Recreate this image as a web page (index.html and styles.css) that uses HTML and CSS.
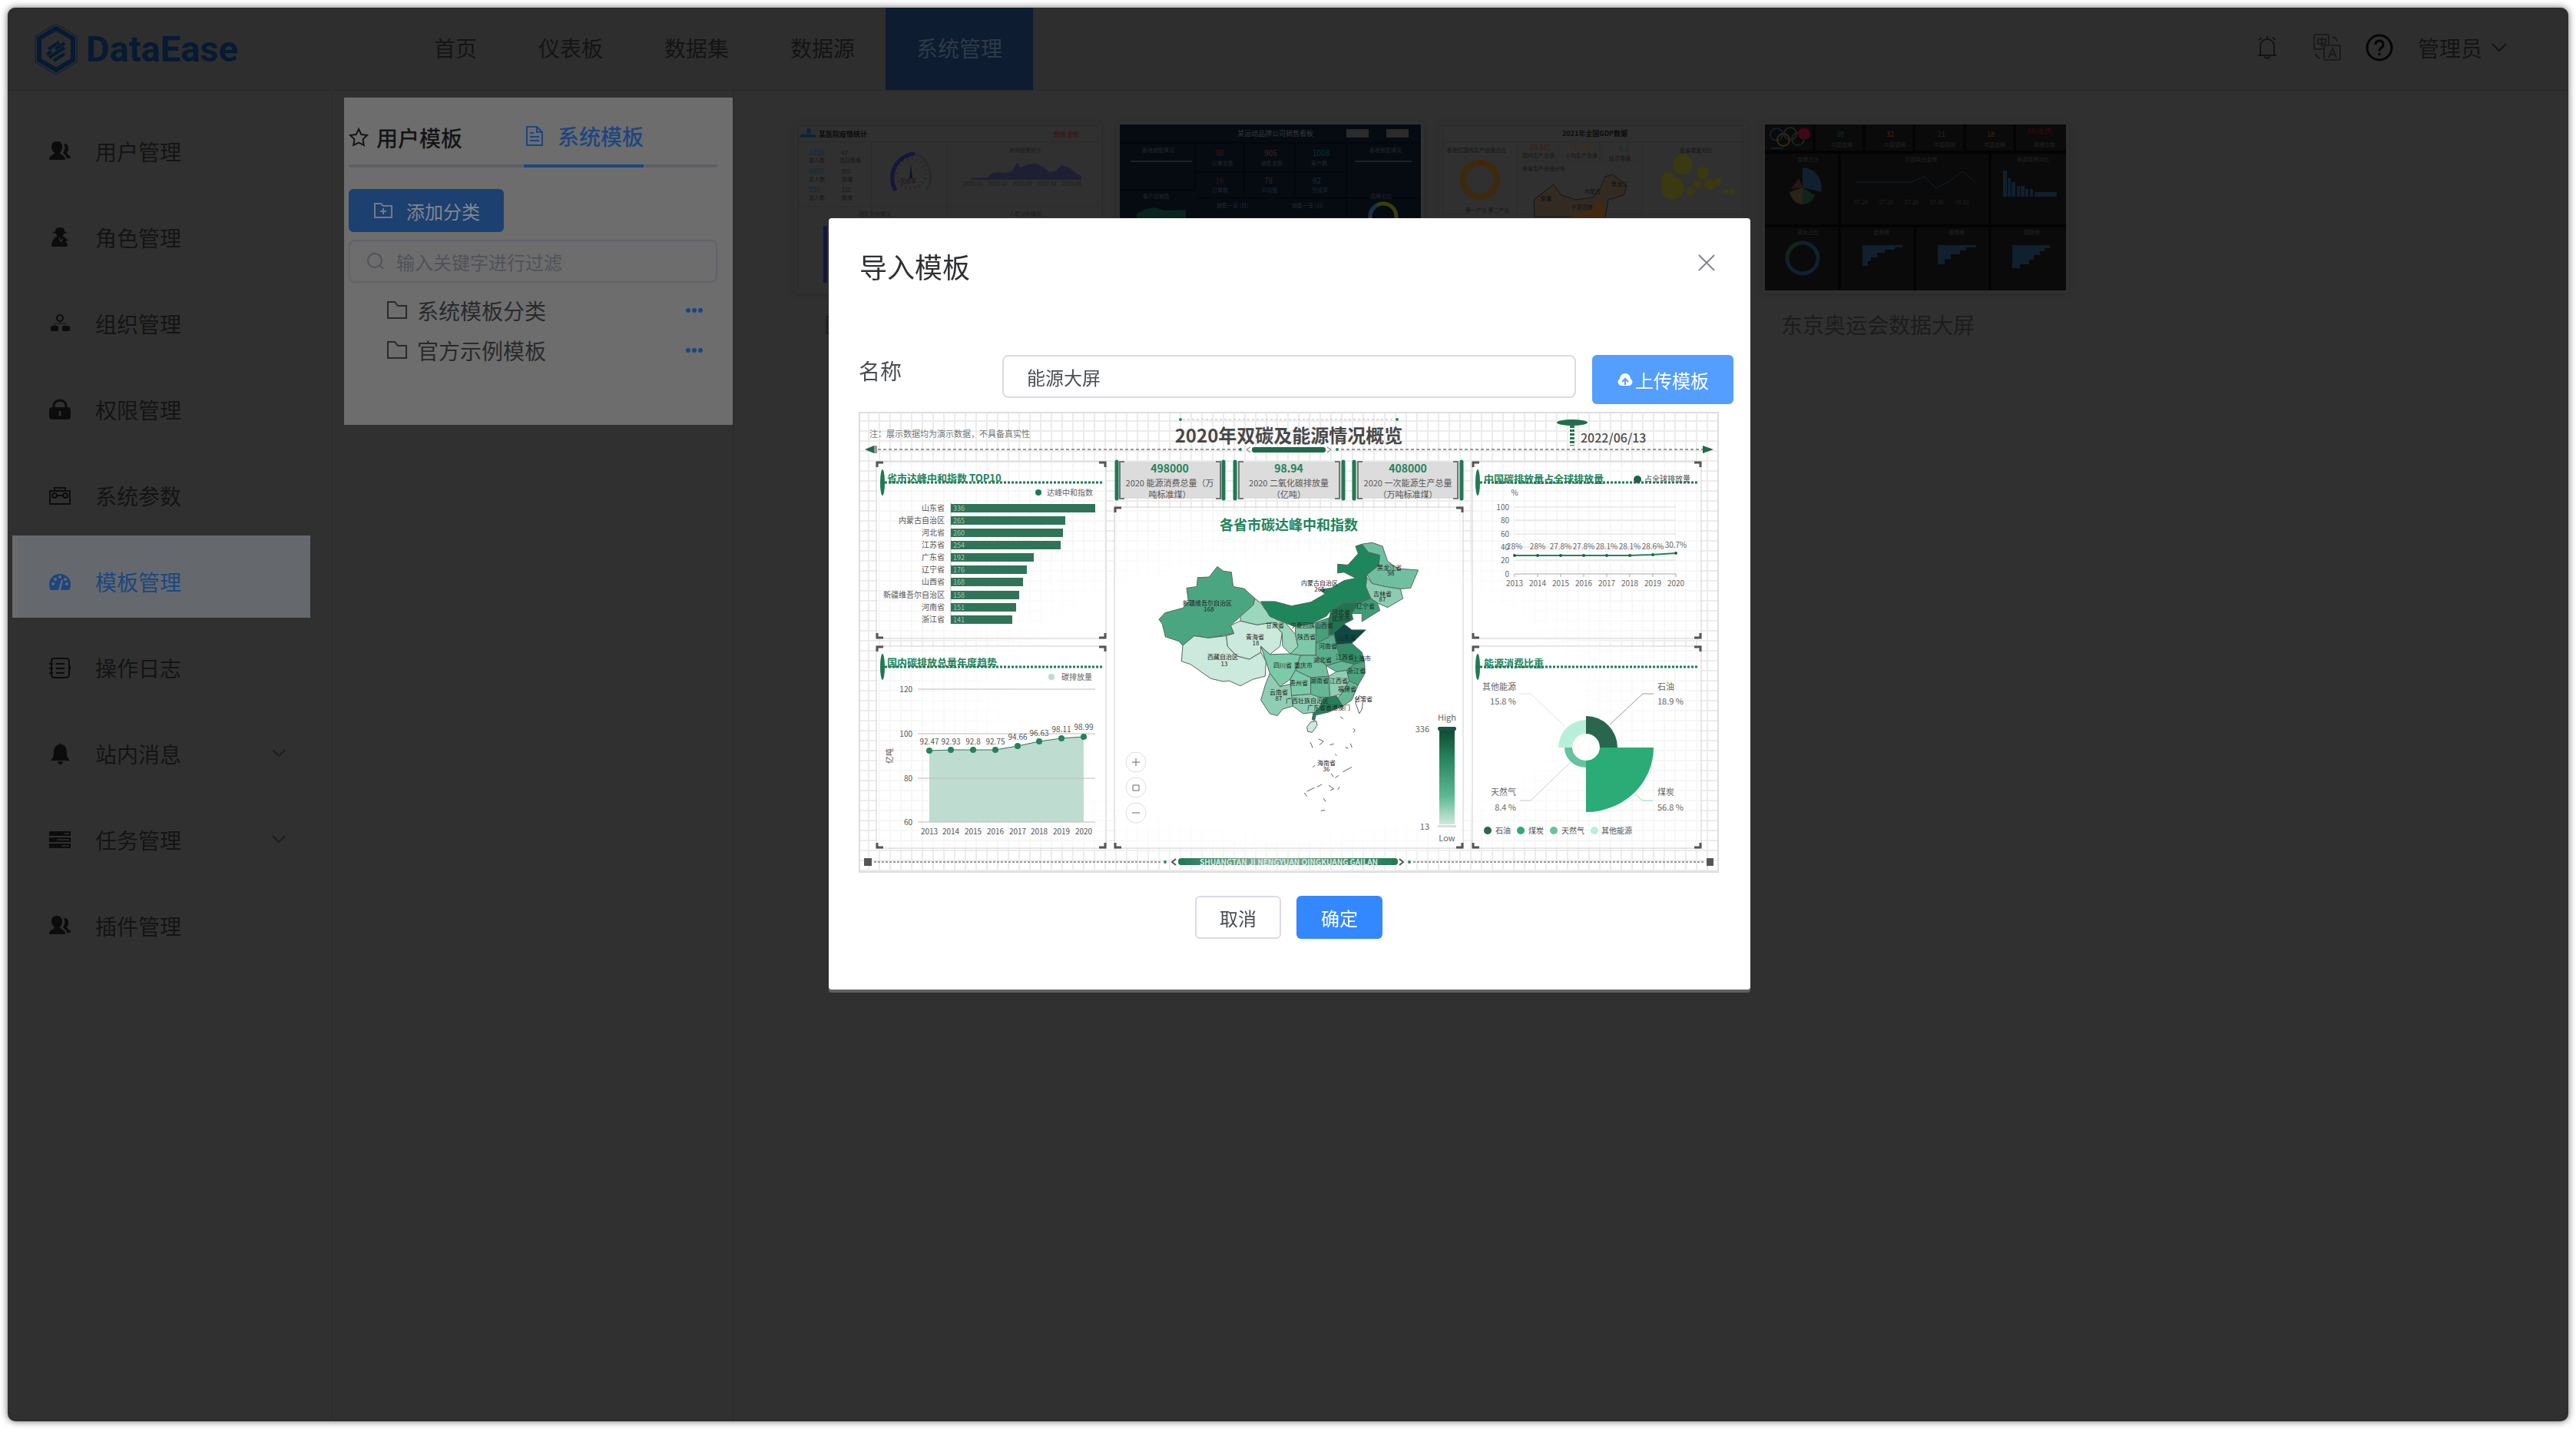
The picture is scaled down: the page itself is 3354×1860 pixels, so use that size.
FILE: index.html
```
<!DOCTYPE html>
<html lang="zh-CN">
<head>
    <meta charset="UTF-8">
    <meta name="viewport" content="width=device-width, initial-scale=1.0">
    <title>DataEase</title>
    <link rel="stylesheet" href="styles.css">
</head>
<body>
    <div class="window">
        <header class="topbar">
            <a class="logo" href="#">
                <svg width="60" height="70" viewBox="0 0 60 70" fill="none" stroke="#061a33">
                    <path d="M30 2 57 18V52L30 68 3 52V18Z" stroke-width="1"/>
                    <path d="M30 8 52 21V49L30 62 8 49V21Z" stroke-width="6"/>
                    <path d="M20 35 34 26M18 42 24 38M29 35 41 27M21 46 41 33M27 50 41 41" stroke-width="4"/>
                </svg>
                <span>DataEase</span>
            </a>
            <nav class="nav">
                <a href="#">首页</a>
                <a href="#">仪表板</a>
                <a href="#">数据集</a>
                <a href="#">数据源</a>
                <a href="#" class="active">系统管理</a>
            </nav>
            <div class="tools">
                <button type="button" class="tool-bell" aria-label="消息">
                    <svg width="26" height="32" viewBox="0 0 26 32" fill="none" stroke="#141414" stroke-width="2">
                        <path d="M13 1v3M4 26V14a9 9 0 0 1 18 0v12ZM1 26h24M9 28l4 2 4-2M2 6l4-3M24 6l-4-3"/>
                    </svg>
                </button>
                <button type="button" class="tool-lang" aria-label="语言">
                    <svg width="36" height="36" viewBox="0 0 36 36" fill="none" stroke="#1a1b1d" stroke-width="2">
                        <path d="M14 20H3a2 2 0 0 1-2-2V3a2 2 0 0 1 2-2h15a2 2 0 0 1 2 2v11M6 7h10v6H6ZM11 4v13M16 15h17a2 2 0 0 1 2 2v15a2 2 0 0 1-2 2H16a2 2 0 0 1-2-2V17a2 2 0 0 1 2-2ZM20 31l5-12 5 12M22 27h6M25 4q5 1 6 6M3 26q1 5 6 6"/>
                    </svg>
                </button>
                <button type="button" class="tool-help" aria-label="帮助">
                    <svg width="36" height="36" viewBox="0 0 36 36" fill="none" stroke="#060606" stroke-width="3">
                        <circle cx="18" cy="18" r="16"/>
                        <path d="M13 14q0-5 5-5t5 5q0 3-3 4.500-2 1-2 4M18 25v3"/>
                    </svg>
                </button>
                <button type="button" class="tool-user">管理员
                    <svg width="20" height="12" viewBox="0 0 20 12" fill="none" stroke="#141414" stroke-width="2"><path d="M1 1l9 9 9-9"/></svg>
                </button>
            </div>
        </header>

        <div class="body">
            <aside class="sidebar">
                <a href="#">
                    <svg viewBox="0 0 28 28"><path d="M10 1c5 0 7 3 7 7s-1 6-3 8c1 3 7 3 7 9H0c0-6 6-6 7-9-2-2-4-4-4-8s2-7 7-7ZM19 4c5 0 6 3 6 6s-1 5-2 6c1 3 5 3 5 7h-5c-1-4-3-5-5-7 3-4 3-8 1-12Z"/></svg>
                    <span>用户管理</span>
                </a>
                <a href="#">
                    <svg viewBox="0 0 28 28"><path d="M9 2l5-1 5 1 1 4 4 2-5 1q-1 5-5 5t-5-5L4 8l4-2ZM9 13h10l6 5-4 1 3 4-1 3H3q0-9 6-13Z"/><path d="M13 15l2 4 3-3" stroke="#303030" fill="none" stroke-width="1.500"/></svg>
                    <span>角色管理</span>
                </a>
                <a href="#">
                    <svg viewBox="0 0 28 28"><circle cx="14" cy="7" r="4" fill="none" stroke="#0c0c0c" stroke-width="2"/><path d="M14 11v3M7 18v-4h14v4" fill="none" stroke="#151515"/><rect x="2" y="17" width="10" height="7" rx="2"/><rect x="17" y="17" width="10" height="7" rx="2"/></svg>
                    <span>组织管理</span>
                </a>
                <a href="#">
                    <svg viewBox="0 0 28 28"><path d="M6 11V9a8 7 0 0 1 16 0v2" fill="none" stroke="#0c0c0c" stroke-width="3"/><rect y="11" width="28" height="16" rx="4"/><path d="M14 16v6" stroke="#303030" stroke-width="3"/></svg>
                    <span>权限管理</span>
                </a>
                <a href="#">
                    <svg viewBox="0 0 28 28" fill="none"><path d="M1 8h26v17H1ZM7 8V4h14v4M9 14h10" fill="none" stroke="#0c0c0c" stroke-width="2"/><circle cx="7" cy="14" r="3" fill="none" stroke="#0c0c0c" stroke-width="2"/><circle cx="21" cy="14" r="3" fill="none" stroke="#0c0c0c" stroke-width="2"/></svg>
                    <span>系统参数</span>
                </a>
                <a href="#" class="active">
                    <svg viewBox="0 0 28 28"><path d="M2 25q-2-2-2-8a14 13 0 0 1 28 0q0 6-2 8Z"/><g fill="#65696e"><circle cx="5" cy="17" r="2"/><circle cx="8" cy="11" r="2"/><circle cx="14" cy="8" r="2"/><circle cx="23" cy="17" r="2"/><circle cx="21" cy="11" r="2"/><path d="M16 11l2 1-3 13h-3Z"/></g></svg>
                    <span>模板管理</span>
                </a>
                <a href="#">
                    <svg viewBox="0 0 28 28"><path d="M6 2h16q4 0 4 4v17q0 4-4 4H6q-3 0-3-4V6q0-4 3-4ZM0 9h5M0 15h5M0 21h5M9 9h11M9 15h11M9 21h11M27 12v5" fill="none" stroke="#0c0c0c" stroke-width="2"/></svg>
                    <span>操作日志</span>
                </a>
                <a href="#">
                    <svg viewBox="0 0 28 28"><path d="M14 0l2 2c5 1 7 5 7 10 0 6 1 8 4 11H2c3-3 4-5 4-11 0-5 2-9 7-10ZM11 24h7q-1 4-3.500 4T11 24Z"/></svg>
                    <span>站内消息</span>
                    <svg class="arrow" viewBox="0 0 18 12"><path d="M1 1l8 8 8-8"/></svg>
                </a>
                <a href="#">
                    <svg viewBox="0 0 28 28"><path d="M0 3h28v6H0ZM0 11h28v6H0ZM0 19h28v6H0Z"/><path d="M20 6h6M10 14h16M16 22h10" stroke="#303030" stroke-width="1.500"/></svg>
                    <span>任务管理</span>
                    <svg class="arrow" viewBox="0 0 18 12"><path d="M1 1l8 8 8-8"/></svg>
                </a>
                <a href="#">
                    <svg viewBox="0 0 28 28"><path d="M10 1c5 0 7 3 7 7s-1 6-3 8c1 3 7 3 7 9H0c0-6 6-6 7-9-2-2-4-4-4-8s2-7 7-7ZM19 4c5 0 6 3 6 6s-1 5-2 6c1 3 5 3 5 7h-5c-1-4-3-5-5-7 3-4 3-8 1-12Z"/></svg>
                    <span>插件管理</span>
                </a>
            </aside>

            <section class="category">
                <div class="panel">
                    <div class="tabs">
                        <a href="#" class="tab">
                            <svg width="26" height="26" viewBox="0 0 26 26" fill="none" stroke="#161616" stroke-width="2"><path d="M13 2l3.300 7 7.700 1-5.500 5.300 1.300 7.700L13 19.500 6.200 23l1.300-7.700L2 10l7.700-1Z"/></svg>
                            用户模板
                        </a>
                        <a href="#" class="tab tab-active">
                            <svg width="24" height="26" viewBox="0 0 24 26" fill="none" stroke="#1c4680" stroke-width="2"><path d="M2 1h13l7 7v17H2ZM15 1v7h7M6 9h5M6 14h12M6 19h12"/></svg>
                            系统模板
                        </a>
                    </div>
                    <button type="button" class="add">
                        <svg width="24" height="20" viewBox="0 0 24 20" fill="none" stroke="#76797e" stroke-width="2"><path d="M1 1h8l3 3h11v15H1ZM8 11h8M12 7v8"/></svg>
                        添加分类
                    </button>
                    <div class="search">
                        <svg width="22" height="22" viewBox="0 0 22 22" fill="none" stroke="#505259" stroke-width="2"><circle cx="10" cy="10" r="9"/><path d="M17 17l4 4"/></svg>
                        <input type="text" aria-label="输入关键字进行过滤" placeholder="输入关键字进行过滤">
                    </div>
                    <ul class="tree">
                        <li>
                            <svg width="26" height="24" viewBox="0 0 26 24" fill="none" stroke="#292a2c" stroke-width="2"><path d="M1 1h9l4 5h11v16H1Z"/></svg>
                            <span>系统模板分类</span>
                            <button type="button" aria-label="更多"><svg width="24" height="8" viewBox="0 0 24 8" fill="#1c4680"><circle cx="4" cy="4" r="3"/><circle cx="12" cy="4" r="3"/><circle cx="20" cy="4" r="3"/></svg></button>
                        </li>
                        <li>
                            <svg width="26" height="24" viewBox="0 0 26 24" fill="none" stroke="#292a2c" stroke-width="2"><path d="M1 1h9l4 5h11v16H1Z"/></svg>
                            <span>官方示例模板</span>
                            <button type="button" aria-label="更多"><svg width="24" height="8" viewBox="0 0 24 8" fill="#1c4680"><circle cx="4" cy="4" r="3"/><circle cx="12" cy="4" r="3"/><circle cx="20" cy="4" r="3"/></svg></button>
                        </li>
                    </ul>
                </div>
            </section>

            <main class="cards">
                <article class="card">
                    <div class="thumb">
                        <svg viewBox="0 0 392 216">
                            <rect width="392" height="216" fill="#303030"/>
                            <path d="M0 23H392M0 107H392M97 23V216M195 23V216M.5 0V216M391.500 0V216M0 .5H392" stroke="#2a2a2a" fill="none"/>
                            <path d="M13 5l4 0 1 7-6 0ZM4 13h20v4H4Z" fill="#0b2638"/>
                            <text x="28" y="16" font-size="9" font-weight="700" fill="#0c0c0c">某医院疫情统计</text>
                            <text x="334" y="16" font-size="8" fill="#3f0f12">数据 更新</text>
                            <g font-size="9" fill="#0c2a3a"><text x="15" y="40">1700</text><text x="15" y="64">6800</text><text x="15" y="88">810</text></g>
                            <g font-size="7" fill="#161616"><text x="15" y="49">总人数</text><text x="15" y="74">总人数</text><text x="15" y="98">总人数</text><text x="58" y="40">67</text><text x="55" y="49">当日新增</text><text x="58" y="64">807</text><text x="58" y="74">新增</text><text x="58" y="88">221</text><text x="58" y="98">新增</text></g>
                            <path d="M128 86A32 32 0 0 1 153 38" fill="none" stroke="#15163b" stroke-width="5"/>
                            <path d="M153 38A32 32 0 0 1 168 86" fill="none" stroke="#2a2a2a" stroke-width="3"/>
                            <circle cx="148" cy="64" r="19" fill="none" stroke="#202020" stroke-width="4" stroke-dasharray="1 5"/>
                            <path d="M146 70l2-18 2 18Z" fill="#10112a"/>
                            <text x="134" y="76" font-size="7" fill="#241010">完成率</text>
                            <path d="M226 72V70L248 69 254 63 262 62 270 63 280 61 286 50 291 56 300 52 312 51 322 57 328 62 336 61 344 53 356 57 362 63 370 67V72Z" fill="#1e1f33"/>
                            <g font-size="7" fill="#1b1b1b"><text x="276" y="36">病例趋势统计</text><text x="216" y="80">2020-01</text><text x="248" y="80">2020-02</text><text x="280" y="80">2020-03</text><text x="312" y="80">2020-04</text><text x="344" y="80">2020-05</text><text x="80" y="119">地区分布情况</text><text x="276" y="119">人群分布情况</text></g>
                            <path d="M34 132h5v74h-5Z" fill="#15163b"/>
                        </svg>
                    </div>
                    <p>&ensp;医院疫情数据</p>
                </article>
                <article class="card">
                    <div class="thumb">
                        <svg viewBox="0 0 392 216">
                            <rect width="392" height="216" fill="#060b12"/>
                            <path d="M0 24H392M98 24V86M162 24V96M228 24V96M295 24V150M98 62H295M0 85H98M98 96H392" stroke="#03070c" stroke-width="2"/>
                            <rect x="295" y="6" width="29" height="11" fill="#2b2b2b"/><rect x="347" y="6" width="29" height="11" fill="#2b2b2b"/>
                            <text x="153" y="15" font-size="9" fill="#34373a">某运动品牌公司销售看板</text>
                            <g font-size="7" fill="#202831"><text x="29" y="36">各地销售情况</text><text x="325" y="36">各地销售情况</text><text x="120" y="53">订单总数</text><text x="184" y="53">销售总数</text><text x="249" y="53">客户数</text><text x="30" y="96">各产品销售</text><text x="326" y="96">品牌占比</text><text x="126" y="108">销售一览 (月)</text><text x="224" y="108">销售一览 (日)</text><text x="120" y="88">订单数</text><text x="184" y="88">平均值</text><text x="250" y="88">完成率</text></g>
                            <g font-size="10"><text x="124" y="41" fill="#401015">98</text><text x="188" y="41" fill="#402610">906</text><text x="251" y="41" fill="#08303e">1008</text><text x="124" y="77" fill="#30120e">16</text><text x="188" y="77" fill="#332611">78</text><text x="251" y="77" fill="#08303e">82</text></g>
                            <path d="M14 48H94M306 48H380" stroke="#1c2228" stroke-width="2"/>
                            <path d="M22 216V116L34 110 46 108 58 112 86 111V216Z" fill="#09241f"/>
                            <circle cx="343" cy="120" r="17" fill="none" stroke="#3c3d0b" stroke-width="5"/><path d="M326 120a17 17 0 0 1 9-15" fill="none" stroke="#14304d" stroke-width="5"/>
                        </svg>
                    </div>
                    <p></p>
                </article>
                <article class="card">
                    <div class="thumb">
                        <svg viewBox="0 0 392 216">
                            <rect width="392" height="216" fill="#303030"/>
                            <path d="M0 23H392M97 23V116M260 23V116M97 48H260M151 23V48M205 23V48M0 117H392M.5 0V216M391.500 0V216M0 .5H392" stroke="#2a2a2a" fill="none"/>
                            <text x="156" y="15" font-size="9" font-weight="700" fill="#0c0c0c">2021年全国GDP数据</text>
                            <g font-size="7" fill="#161616"><text x="6" y="36">各地区国内生产总值占比</text><text x="104" y="43">国内生产总值</text><text x="160" y="43">人均生产总值</text><text x="217" y="46">经济增速</text><text x="309" y="36">各省增速对比</text><text x="104" y="60">各省生产总值分布</text><text x="30" y="114">第一产业 第二产业</text></g>
                            <g font-size="9"><text x="114" y="33" fill="#401515">28.5亿</text><text x="166" y="33" fill="#40290f">4123亿</text><text x="230" y="35" fill="#0e3218">8.1</text></g>
                            <circle cx="49" cy="72" r="22" fill="none" stroke="#3d290c" stroke-width="8"/><path d="M47 49h8" stroke="#49200b" stroke-width="7"/>
                            <path d="M119 98 145 78 155 92 174 98 196 95 206 82 212 68 222 65 240 80 236 92 216 98 212 120H120Z" fill="#332b21" stroke="#151515"/>
                            <path d="M165 120 178 116 190 112 206 98 213 108 210 124Z" fill="#40290f"/>
                            <g font-size="7" fill="#101010"><text x="128" y="99">新疆</text><text x="185" y="90">内蒙古</text><text x="168" y="110">宁夏回族</text><text x="220" y="80">黑龙江</text></g>
                            <g fill="#3b390f"><circle cx="313" cy="52" r="13"/><circle cx="339" cy="63" r="8"/><circle cx="294" cy="71" r="9"/><circle cx="300" cy="83" r="15"/><circle cx="332" cy="78" r="5"/><circle cx="348" cy="78" r="7"/><circle cx="358" cy="75" r="5"/><circle cx="323" cy="87" r="5"/><circle cx="369" cy="87" r="3"/><circle cx="377" cy="87" r="4"/></g>
                        </svg>
                    </div>
                    <p></p>
                </article>
                <article class="card">
                    <div class="thumb">
                        <svg viewBox="0 0 392 216">
                            <rect width="392" height="216" fill="#0a0a0a"/>
                            <path d="M0 36H392M0 132H392" stroke="#030303" stroke-width="4"/>
                            <path d="M64 0V36M129 0V36M194 0V36M260 0V36M325 0V36M97 36V216M293 36V216M195 132V216" stroke="#030303" stroke-width="3"/>
                            <g fill="none" stroke-width="2"><circle cx="15" cy="13" r="8" stroke="#0c2033"/><circle cx="24" cy="20" r="8" stroke="#3d2a0c"/><circle cx="33" cy="12" r="8" stroke="#222"/><circle cx="43" cy="19" r="8" stroke="#0d2a18"/></g>
                            <circle cx="51" cy="12" r="8" fill="#3d0818"/><path d="M8 31h16" stroke="#0c2033" stroke-width="2"/>
                            <g font-size="9"><text x="93" y="16" fill="#0e3218">38</text><text x="158" y="16" fill="#402610">32</text><text x="225" y="16" fill="#262626">21</text><text x="289" y="16" fill="#40290f">18</text><text x="342" y="12" fill="#3d0810">88(金牌)</text></g>
                            <g font-size="7" fill="#232323"><text x="86" y="29">中国金牌</text><text x="155" y="29">中国银牌</text><text x="220" y="29">中国铜牌</text><text x="285" y="29">中国金牌</text><text x="350" y="29">奖牌总数</text><text x="42" y="48">金牌占比</text><text x="182" y="48">中国每日金牌</text><text x="328" y="48">各国奖牌对比</text><text x="42" y="143">男女占比</text><text x="141" y="143">金牌榜</text><text x="239" y="143">银牌榜</text><text x="337" y="143">铜牌榜</text><text x="116" y="104">07-24</text><text x="149" y="104">07-26</text><text x="182" y="104">07-28</text><text x="215" y="104">07-30</text><text x="248" y="104">08-01</text></g>
                            <path d="M49 82V56A25 26 0 0 1 73 88Z" fill="#10202e"/><path d="M49 82 65 92A16 18 0 0 1 49 104Z" fill="#12241a"/><path d="M49 82V104A18 20 0 0 1 32 88Z" fill="#2a2318"/><path d="M49 82 34 84 44 70Z" fill="#2a1518"/>
                            <path d="M118 75H190L208 68 223 83 240 74 257 61 274 75" fill="none" stroke="#10202e"/>
                            <path d="M310 60h5v34h-5ZM316 70h4v24h-4ZM321 75h5v19h-5ZM328 80h4v14h-4ZM333 80h5v14h-5ZM339 84h4v10h-4ZM345 84h4v10h-4ZM351 88h29v6h-29Z" fill="#10202e"/>
                            <circle cx="49" cy="174" r="20" fill="none" stroke="#10202e" stroke-width="5"/><path d="M29 176a20 20 0 0 1 20-22" fill="none" stroke="#12241a" stroke-width="5"/>
                            <path d="M127 157h52v3h-10v3h-13v4h-10v6h-8v5h-4v6h-7ZM225 157h50v3h-13v4h-8v5h-12v6h-8v7h-9ZM322 157h49v4h-7v4h-6v5h-8v6h-6v6h-12v5h-10Z" fill="#10202e"/>
                        </svg>
                    </div>
                    <p>东京奥运会数据大屏</p>
                </article>
            </main>
        </div>
    </div>

    <div class="overlay">
        <form class="dialog" role="dialog" aria-labelledby="dialogTitle">
            <div class="dialog-head">
                <h2 id="dialogTitle">导入模板</h2>
                <button type="button" class="close" aria-label="关闭">
                    <svg width="22" height="22" viewBox="0 0 22 22" fill="none" stroke="#82858c" stroke-width="2"><path d="M1 1l20 20M21 1L1 21"/></svg>
                </button>
            </div>
            <div class="form-row">
                <label for="templateName">名称</label>
                <input type="text" id="templateName" value="能源大屏">
                <button type="button" class="upload">
                    <svg width="22" height="18" viewBox="0 0 22 18"><path d="M5 17a5 5 0 0 1-1-9 7 7 0 0 1 14 0 5 5 0 0 1-1 9Z" fill="#fff"/><path d="M11 16V9M7 12l4-4 4 4" fill="none" stroke="#549eff" stroke-width="2"/></svg>
                    上传模板
                </button>
            </div>

            <svg class="preview" viewBox="0 0 1120 600">
                <defs>
                    <pattern id="grid" width="14" height="13" patternUnits="userSpaceOnUse"><path d="M13 0V13M0 12H14" stroke="#ececec" stroke-width="2" fill="none"/></pattern>
                    <radialGradient id="fade" cx="50%" cy="50%" r="50%"><stop offset="0.7" stop-color="#fff"/><stop offset="1" stop-color="#fff" stop-opacity="0"/></radialGradient>
                    <linearGradient id="scale" x1="0" y1="0" x2="0" y2="1"><stop offset="0" stop-color="#0f4a33"/><stop offset="0.3" stop-color="#25835d"/><stop offset="0.7" stop-color="#5bb893"/><stop offset="1" stop-color="#cdeadd"/></linearGradient>
                    <linearGradient id="pill" x1="0" y1="0" x2="1" y2="0"><stop offset="0" stop-color="#1f7a54"/><stop offset="0.4" stop-color="#8fa99d"/><stop offset="1" stop-color="#1f7a54"/></linearGradient>
                </defs>
                <rect width="1120" height="600" fill="#fff"/>
                <rect width="1120" height="600" fill="url(#grid)"/>
                <ellipse cx="560" cy="370" rx="500" ry="240" fill="url(#fade)"/>
                <rect x="1" y="1" width="1118" height="598" fill="none" stroke="#dedede" stroke-width="2"/>

                <!-- heading -->
                <text x="14" y="33" font-size="11" fill="#777">注：展示数据均为演示数据，不具备真实性</text>
                <text x="560" y="40" font-size="24" font-weight="700" text-anchor="middle" fill="#484848">2020年双碳及能源情况概览</text>
                <path d="M422 10H698" stroke="#bbb" stroke-dasharray="3 3"/>
                <path d="M25 49H495M628 49H1099" stroke="#999" stroke-width="2" stroke-dasharray="4 3"/>
                <path d="M8 49 20 44V54ZM1113 49 1099 44V54Z" fill="#1e6b4a"/><path d="M20 44h4v10h-4Z" fill="#999"/>
                <g fill="#22895f"><circle cx="419" cy="10" r="2"/><circle cx="701" cy="10" r="2"/><circle cx="497" cy="49" r="2"/><circle cx="623" cy="49" r="2"/></g>
                <rect x="512" y="46" width="96" height="7" rx="3" fill="#1e6b4a"/>
                <path d="M510 46 505 49 510 53M610 46 615 49 610 53" fill="none" stroke="#666"/>
                <ellipse cx="929" cy="14" rx="20" ry="4" fill="#1f6f4d"/>
                <path d="M929 18V44" stroke="#1f7a54" stroke-width="6" stroke-dasharray="3 2"/>
                <text x="940" y="40" font-size="16" font-weight="500" fill="#4a4a4a">2022/06/13</text>

                <!-- key figures -->
                <g fill="#dcdcdc"><rect x="335" y="65" width="140" height="48"/><rect x="490" y="65" width="141" height="48"/><rect x="645" y="65" width="140" height="48"/></g>
                <path d="M336 65v48M475 65v48M490 65v48M631 65v48M645 65v48M785 65v48" stroke="#1f7a54" stroke-width="5" stroke-linecap="round"/>
                <path d="M346 65h-6v48h6M465 65h6v48h-6M501 65h-6v48h6M620 65h6v48h-6M656 65h-6v48h6M774 65h6v48h-6" fill="none" stroke="#777" stroke-width="2"/>
                <g font-size="14" font-weight="700" text-anchor="middle" fill="#22845c"><text x="405" y="79">498000</text><text x="560" y="79">98.94</text><text x="715" y="79">408000</text></g>
                <g font-size="11" text-anchor="middle" fill="#555"><text x="405" y="97">2020 能源消费总量（万</text><text x="405" y="112">吨标准煤）</text><text x="560" y="97">2020 二氧化碳排放量</text><text x="560" y="112">（亿吨）</text><text x="715" y="97">2020 一次能源生产总量</text><text x="715" y="112">（万吨标准煤）</text></g>

                <!-- panels -->
                <g fill="#fff" fill-opacity="0.6" stroke="#cfcfcf"><rect x="23" y="65" width="299" height="230"/><rect x="23" y="305" width="299" height="263"/><rect x="333" y="124" width="454" height="444"/><rect x="799" y="65" width="298" height="230"/><rect x="799" y="305" width="298" height="263"/></g>
                <path d="M24 72v-6h8M313 66h8v6M24 288v6h8M313 294h8v-6M24 312v-6h8M313 306h8v6M24 561v6h8M313 567h8v-6M334 131v-6h8M778 125h8v6M334 561v6h8M778 567h8v-6M800 72v-6h8M1088 66h8v6M800 288v6h8M1088 294h8v-6M800 312v-6h8M1088 306h8v6M800 561v6h8M1088 567h8v-6" fill="none" stroke="#555" stroke-width="3"/>
                <g fill="#1f7a54"><ellipse cx="31" cy="92" rx="3" ry="17"/><ellipse cx="31" cy="332" rx="3" ry="17"/><ellipse cx="806" cy="92" rx="3" ry="17"/><ellipse cx="806" cy="332" rx="3" ry="17"/></g>
                <g font-size="13" font-weight="700" fill="#22845c"><text x="37" y="91">省市达峰中和指数 TOP10</text><text x="37" y="331">国内碳排放总量年度趋势</text><text x="814" y="92">中国碳排放量占全球排放量</text><text x="814" y="332">能源消费比重</text></g>
                <path d="M34 92H318M34 332H318M809 92H1093M809 332H1093" stroke="#1f7a54" stroke-width="3" stroke-dasharray="3 2"/>

                <!-- top 10 -->
                <circle cx="234" cy="105" r="4" fill="#1f7a54"/><text x="245" y="109" font-size="10" fill="#666">达峰中和指数</text>
                <path d="M120 118V276" stroke="#bbb"/>
                <g fill="#2f7459"><rect x="120" y="120" width="188" height="11"/><rect x="120" y="136" width="149" height="11"/><rect x="120" y="152" width="146" height="11"/><rect x="120" y="168" width="143" height="11"/><rect x="120" y="184" width="108" height="11"/><rect x="120" y="200" width="99" height="11"/><rect x="120" y="216" width="94" height="11"/><rect x="120" y="233" width="89" height="11"/><rect x="120" y="249" width="85" height="11"/><rect x="120" y="265" width="80" height="11"/></g>
                <g font-size="10" text-anchor="end" fill="#555"><text x="112" y="129">山东省</text><text x="112" y="145">内蒙古自治区</text><text x="112" y="161">河北省</text><text x="112" y="177">江苏省</text><text x="112" y="193">广东省</text><text x="112" y="209">辽宁省</text><text x="112" y="225">山西省</text><text x="112" y="242">新疆维吾尔自治区</text><text x="112" y="258">河南省</text><text x="112" y="274">浙江省</text></g>
                <g font-size="9" fill="#a3c7b7"><text x="123" y="129">336</text><text x="123" y="145">265</text><text x="123" y="161">260</text><text x="123" y="177">254</text><text x="123" y="193">192</text><text x="123" y="209">176</text><text x="123" y="225">168</text><text x="123" y="242">158</text><text x="123" y="258">151</text><text x="123" y="274">141</text></g>

                <!-- yearly trend -->
                <circle cx="251" cy="345" r="4" fill="#b9dccf"/><text x="264" y="349" font-size="10" fill="#666">碳排放量</text>
                <path d="M92 441 120 440 149 440 178 440 207 435 235 429 264 425 293 423V534H92Z" fill="#bfdcd1"/>
                <path d="M77 361H308M77 419H308M77 477H308M77 534H308" stroke="#bcbcbc"/>
                <path d="M92 441 120 440 149 440 178 440 207 435 235 429 264 425 293 423" fill="none" stroke="#2f7459"/>
                <g fill="#22845c"><circle cx="92" cy="441" r="4"/><circle cx="120" cy="440" r="4"/><circle cx="149" cy="440" r="4"/><circle cx="178" cy="440" r="4"/><circle cx="207" cy="435" r="4"/><circle cx="235" cy="429" r="4"/><circle cx="264" cy="425" r="4"/><circle cx="293" cy="423" r="4"/></g>
                <g font-size="10" fill="#555" text-anchor="middle"><text x="92" y="433">92.47</text><text x="120" y="433">92.93</text><text x="149" y="433">92.8</text><text x="178" y="433">92.75</text><text x="207" y="427">94.66</text><text x="235" y="422">96.63</text><text x="264" y="417">98.11</text><text x="293" y="414">98.99</text>
                <text x="92" y="550">2013</text><text x="120" y="550">2014</text><text x="149" y="550">2015</text><text x="178" y="550">2016</text><text x="207" y="550">2017</text><text x="235" y="550">2018</text><text x="264" y="550">2019</text><text x="293" y="550">2020</text></g>
                <g font-size="10" fill="#555" text-anchor="end"><text x="70" y="365">120</text><text x="70" y="423">100</text><text x="70" y="481">80</text><text x="70" y="538">60</text></g>
                <text transform="translate(44 458) rotate(-90)" font-size="10" fill="#555">亿吨</text>

                <!-- map -->
                <text x="560" y="154" font-size="18" font-weight="700" text-anchor="middle" fill="#22845c">各省市碳达峰中和指数</text>
                <g class="map" transform="translate(322 -6) scale(0.3333 0.3891)">
                    <path fill="#4aa681" d="M435 533 458 548 490 552 497 600 540 607 582 640 575 662 525 700 487 730 500 757 400 772 345 765 300 797 285 783 232 768 220 725 207 710 230 688 300 672 322 650 315 605 355 600 358 570 403 568Z"/>
                    <path fill="#cbe9dc" d="M300 797 345 765 400 772 470 765 475 800 510 832 560 843 605 820 625 850 622 900 575 910 525 932 480 915 460 918 410 908 330 860 295 850Z"/>
                    <path fill="#cbe9dc" d="M500 757 487 730 525 715 590 728 650 720 688 755 680 800 640 827 605 800 605 820 560 843 510 832 475 800 470 765Z"/>
                    <path fill="#9bd6bd" d="M582 640 605 655 625 680 665 710 700 720 740 760 750 800 720 825 690 800 688 755 650 720 590 728 525 715 525 700 575 662Z"/>
                    <path fill="#1f855b" d="M605 650 660 650 725 665 800 652 855 625 835 610 880 605 930 580 975 572 930 552 905 555 905 525 945 528 985 490 975 465 1000 458 1025 485 1070 495 1065 530 1020 560 1015 600 1035 640 990 655 930 655 880 680 860 700 800 725 740 735 690 718 640 700Z"/>
                    <path fill="#71bfa1" d="M1000 458 1040 453 1080 465 1100 515 1140 540 1220 545 1190 605 1150 608 1090 600 1040 590 1020 560 1065 530 1070 495 1025 485Z"/>
                    <path fill="#8ccdb2" d="M1015 600 1020 570 1040 590 1090 600 1150 608 1160 640 1100 670 1060 655 1035 640Z"/>
                    <path fill="#3f9c77" d="M990 655 1035 640 1060 655 1070 680 1000 717 1000 690 960 690Z"/>
                    <path fill="#21734f" d="M880 680 930 655 990 655 960 690 965 710 930 725 890 760 870 765 870 710Z"/>
                    <path fill="#45a07a" d="M820 720 870 705 870 770 820 790Z"/>
                    <path fill="#7fc9ab" d="M740 735 820 720 820 830 760 830 720 825 750 800 740 760Z"/>
                    <path fill="#0c4a43" d="M890 755 930 725 960 745 1015 745 960 790 900 795Z"/>
                    <path fill="#58ae8b" d="M820 790 870 770 890 760 900 795 920 850 860 865 820 830Z"/>
                    <path fill="#2f8e67" d="M900 795 960 790 1000 820 1010 850 970 860 920 850Z"/>
                    <path fill="#4aa681" d="M970 860 1010 850 1012 890 985 930 950 915 940 880Z"/>
                    <path fill="#65b897" d="M920 850 970 860 940 880 900 885 870 870 860 865Z"/>
                    <path fill="#71bfa1" d="M760 830 820 830 860 865 870 900 800 905 740 880Z"/>
                    <path fill="#7acbaa" d="M605 800 640 827 720 825 760 830 740 880 720 910 680 935 640 890 625 850Z"/>
                    <path fill="#8fceb4" d="M640 890 680 935 725 925 730 1000 690 1010 670 1032 640 1025 605 980 622 930Z"/>
                    <path fill="#7acbaa" d="M720 910 740 880 800 905 800 960 725 965Z"/>
                    <path fill="#65b897" d="M800 905 870 900 875 970 800 970Z"/>
                    <path fill="#8fceb4" d="M870 900 900 885 940 880 950 915 920 960 875 970Z"/>
                    <path fill="#65b897" d="M950 915 985 930 960 980 925 1000 900 975 920 960Z"/>
                    <path fill="#8fceb4" d="M725 965 800 960 850 975 830 1020 770 1025 730 1000Z"/>
                    <path fill="#23805a" d="M850 975 900 965 925 1000 870 1020 820 1030 815 1048 805 1045 810 1022 830 1010Z"/>
                    <path fill="#cbe9dc" d="M785 1070 800 1053 822 1050 825 1065 805 1088 788 1085Z"/>
                    <path fill="none" d="M975 990 990 965 1005 975 1000 1010 990 1025ZM915 1035l12 8M965 1075l8 5-6 8M798 1120l10 20M830 1110l20 8-16 12M875 1130l15-4M935 1138l12 3M955 1125l6 14M895 1160l6 6M808 1205l8-8M775 1290l10 12M785 1285l30-12M825 1270l18-8M850 1308l8 12M840 1350l16-2M870 1265l20 12-14 5M895 1240l14-8M905 1280l8-10M925 1220l35-16M880 1225l8 12"/>
                </g>
                <g font-size="8" text-anchor="middle" fill="#222"><text x="454" y="252">新疆维吾尔自治区</text><text x="456" y="260">168</text><text x="600" y="226">内蒙古自治区</text><text x="600" y="234">265</text><text x="516" y="296">青海省</text><text x="517" y="304">18</text><text x="474" y="322">西藏自治区</text><text x="476" y="331">13</text><text x="691" y="206">黑龙江省</text><text x="693" y="213">98</text><text x="682" y="240">吉林省</text><text x="682" y="247">87</text><text x="660" y="256">辽宁省</text><text x="628" y="264">河北省</text><text x="628" y="272">北京市</text><text x="542" y="281">甘肃省</text><text x="578" y="281">宁夏回族</text><text x="606" y="281">山西省</text><text x="583" y="296">陕西省</text><text x="611" y="308">河南省</text><text x="636" y="297">山东省</text><text x="633" y="322">江苏省</text><text x="655" y="324">上海市</text><text x="552" y="333">四川省</text><text x="579" y="333">重庆市</text><text x="604" y="326">湖北省</text><text x="648" y="340">浙江省</text><text x="573" y="356">贵州省</text><text x="600" y="353">湖南省</text><text x="625" y="353">江西省</text><text x="636" y="364">福建省</text><text x="547" y="368">云南省</text><text x="547" y="376">87</text><text x="584" y="379">广西壮族自治区</text><text x="612" y="388">广东省香港澳门</text><text x="657" y="377">台湾省</text><text x="609" y="460">海南省</text><text x="609" y="468">36</text></g>
                <g fill="#fff" stroke="#ddd"><circle cx="361" cy="456" r="13"/><circle cx="361" cy="489" r="13"/><circle cx="361" cy="522" r="13"/></g>
                <path d="M356 456h10M361 451v10M357 486h8v7h-8ZM356 522h10" fill="none" stroke="#666"/>
                <rect x="756" y="413" width="20" height="124" fill="url(#scale)"/><rect x="754" y="410" width="24" height="5" rx="2" fill="#125845"/><rect x="754" y="538" width="24" height="3" fill="#ddd"/>
                <g font-size="11" fill="#666"><text x="766" y="402" text-anchor="middle">High</text><text x="766" y="559" text-anchor="middle">Low</text><text x="743" y="417" text-anchor="end">336</text><text x="743" y="544" text-anchor="end">13</text></g>

                <!-- share of world emissions -->
                <circle cx="1014" cy="88" r="5" fill="#1f6049"/><text x="1023" y="91" font-size="10" fill="#555">占全球排放量</text>
                <path d="M854 124H1064M854 141H1064M854 159H1064M854 176H1064M854 193H1064" stroke="#dcdcdc"/>
                <path d="M854 211H1064M854 211v4M884 211v4M914 211v4M944 211v4M974 211v4M1004 211v4M1034 211v4M1064 211v4" stroke="#aaa"/>
                <path d="M854 187H1004L1034 186 1064 184" fill="none" stroke="#22845c" stroke-width="2"/>
                <g fill="#1f6049"><circle cx="854" cy="187" r="2"/><circle cx="884" cy="187" r="2"/><circle cx="914" cy="187" r="2"/><circle cx="944" cy="187" r="2"/><circle cx="974" cy="187" r="2"/><circle cx="1004" cy="187" r="2"/><circle cx="1034" cy="186" r="2"/><circle cx="1064" cy="184" r="2"/></g>
                <g font-size="10" fill="#666" text-anchor="middle"><text x="854" y="109">%</text><text x="854" y="179">28%</text><text x="884" y="179">28%</text><text x="914" y="179">27.8%</text><text x="944" y="179">27.8%</text><text x="974" y="179">28.1%</text><text x="1004" y="179">28.1%</text><text x="1034" y="179">28.6%</text><text x="1064" y="177">30.7%</text>
                <text x="854" y="227">2013</text><text x="884" y="227">2014</text><text x="914" y="227">2015</text><text x="944" y="227">2016</text><text x="974" y="227">2017</text><text x="1004" y="227">2018</text><text x="1034" y="227">2019</text><text x="1064" y="227">2020</text></g>
                <g font-size="10" fill="#666" text-anchor="end"><text x="847" y="128">100</text><text x="847" y="145">80</text><text x="847" y="163">60</text><text x="847" y="180">40</text><text x="847" y="197">20</text><text x="847" y="215">0</text></g>

                <!-- energy mix -->
                <path d="M947 396A41 41 0 0 1 988 437H965A18 18 0 0 0 947 419Z" fill="#28674d"/>
                <path d="M1035 437A88 84 0 0 1 947 521V454A18 18 0 0 0 965 437Z" fill="#2bab76"/>
                <path d="M947 463A28 26 0 0 1 919 437H929A18 18 0 0 0 947 454Z" fill="#66c3a0"/>
                <path d="M911 437A36 36 0 0 1 947 401V419A18 18 0 0 0 929 437Z" fill="#b9efda"/>
                <path d="M978 407 1021 367H1035" fill="none" stroke="#999"/><path d="M919 409 875 367H860" fill="none" stroke="#e2e2e2"/><path d="M927 456 875 506H861" fill="none" stroke="#ccc"/><path d="M1010 497 1021 506H1034" fill="none" stroke="#8fdcc0"/>
                <g font-size="11" fill="#666"><text x="1040" y="362">石油</text><text x="1040" y="381">18.9 %</text><text x="1040" y="499">煤炭</text><text x="1040" y="519">56.8 %</text><g text-anchor="end"><text x="856" y="362">其他能源</text><text x="856" y="381">15.8 %</text><text x="856" y="499">天然气</text><text x="856" y="519">8.4 %</text></g></g>
                <circle cx="819" cy="545" r="5" fill="#28674d"/><circle cx="862" cy="545" r="5" fill="#2bab76"/><circle cx="905" cy="545" r="5" fill="#66c3a0"/><circle cx="958" cy="545" r="5" fill="#b9efda"/>
                <g font-size="10" fill="#555"><text x="829" y="549">石油</text><text x="872" y="549">煤炭</text><text x="915" y="549">天然气</text><text x="967" y="549">其他能源</text></g>

                <!-- footer line -->
                <path d="M20 586H395M722 586H1100" stroke="#999" stroke-dasharray="3 2" stroke-width="2"/>
                <rect x="7" y="581" width="10" height="10" fill="#555"/><rect x="1104" y="581" width="9" height="10" fill="#555"/>
                <circle cx="399" cy="586" r="2" fill="#22895f"/><circle cx="717" cy="586" r="2" fill="#22895f"/>
                <path d="M413 582 408 586 413 590M704 582 709 586 704 590" fill="none" stroke="#555" stroke-width="2"/>
                <rect x="416" y="581" width="286" height="9" rx="4" fill="url(#pill)"/>
                <text x="560" y="590" font-size="10" font-weight="700" text-anchor="middle" fill="#d5eee2">SHUANGTAN JI NENGYUAN QINGKUANG GAILAN</text>
            </svg>

            <div class="dialog-foot">
                <button type="button" class="cancel">取消</button>
                <button type="submit" class="ok">确定</button>
            </div>
        </form>
    </div>
</body>
</html>
```

FILE: styles.css
```
* {
    box-sizing: border-box;
}
body {
    margin: 0;
    padding: 10px;
    background: #fff;
    font-family: "Noto Sans CJK SC", sans-serif;
    font-size: 28px;
    color: #141414;
    overflow: hidden;
}
a {
    color: inherit;
    text-decoration: none;
}
button, input {
    font-family: inherit;
    font-size: 24px;
    color: inherit;
    border: none;
    background: none;
    padding: 0;
    margin: 0;
}
button {
    cursor: pointer;
}
svg {
    display: block;
    flex-shrink: 0;
}
.window {
    display: flex;
    flex-direction: column;
    min-height: calc(100vh - 20px);
    background: #303030;
    border-radius: 10px;
    box-shadow: 0 0 10px rgba(0, 0, 0, 0.6);
    overflow: hidden;
}

/* top bar */
.topbar {
    display: flex;
    height: 108px;
    background: #2e2e2e;
    border-bottom: 1px solid #292929;
}
.logo {
    display: flex;
    align-items: center;
    gap: 9px;
    width: 515px;
    padding-left: 33px;
    font-family: Roboto, sans-serif;
    font-size: 47px;
    font-weight: 700;
    color: #061a33;
}
.nav {
    display: flex;
    flex: 1;
}
.nav a {
    display: flex;
    align-items: center;
    padding: 0 40px 4px;
}
.nav a.active {
    background: #0d1c30;
    color: #303a48;
}
.tools {
    display: flex;
    align-items: center;
    padding: 0 80px 4px 0;
}
.tool-lang {
    margin-left: 47px;
}
.tool-help {
    margin-left: 32px;
}
.tool-user {
    display: flex;
    align-items: center;
    gap: 12px;
    margin-left: 32px;
    font-size: 28px;
}

.body {
    display: flex;
    flex: 1;
}

/* left menu */
.sidebar {
    width: 423px;
    padding: 19px 28px 0 6px;
    border-right: 1px solid #292929;
}
.sidebar a {
    display: flex;
    align-items: center;
    height: 107px;
    margin-bottom: 5px;
    padding: 12px 32px 0 41px;
    border-left: 7px solid transparent;
    fill: #0c0c0c;
}
.sidebar svg {
    width: 28px;
    height: 28px;
}
.sidebar span {
    flex: 1;
    margin-left: 32px;
}
.sidebar a.active {
    background: #65696e;
    border-left-color: #6d6c6b;
    color: #1c4680;
    fill: #1c4680;
}
.sidebar .arrow {
    width: 18px;
    height: 12px;
    fill: none;
    stroke: #1e1e1e;
    stroke-width: 2;
}

/* category panel */
.category {
    width: 522px;
    padding: 9px 0 0 15px;
    border-right: 1px solid #292929;
}
.panel {
    padding: 0 20px 71px 6px;
    background: #6d6d6d;
}
.tabs {
    display: flex;
    gap: 80px;
    height: 91px;
    border-bottom: 4px solid #5e6066;
    font-weight: 500;
}
.tab {
    display: flex;
    align-items: center;
    gap: 10px;
    height: 91px;
    padding-top: 12px;
}
.tab-active {
    gap: 18px;
    padding-left: 2px;
    color: #1c4680;
    border-bottom: 4px solid #1c4680;
}
.add {
    display: flex;
    align-items: center;
    gap: 18px;
    width: 202px;
    height: 56px;
    margin-top: 28px;
    padding-left: 33px;
    background: #1c4070;
    border-radius: 6px;
    color: #83868b;
}
.search {
    display: flex;
    align-items: center;
    gap: 16px;
    height: 56px;
    margin-top: 10px;
    padding: 0 22px;
    border: 2px solid #616369;
    border-radius: 8px;
}
.search input {
    flex: 1;
    height: 50px;
    outline: none;
}
.search input::placeholder {
    color: #505259;
    opacity: 1;
}
.tree {
    list-style: none;
    margin: 10px 0 0;
    padding: 0 18px 0 50px;
    color: #292a2c;
}
.tree li {
    display: flex;
    align-items: center;
    height: 52px;
}
.tree span {
    flex: 1;
    margin-left: 13px;
}

/* template cards */
.cards {
    display: flex;
    flex: 1;
    flex-wrap: wrap;
    align-content: flex-start;
    gap: 18px;
    padding: 39px 0 0 78px;
}
.card {
    width: 402px;
}
.thumb {
    padding: 4px;
    border: 1px solid #2d2d2d;
    border-radius: 6px;
    box-shadow: 0 2px 6px rgba(0, 0, 0, 0.1);
}
.card p {
    margin: 18px 0 0;
    padding-left: 26px;
    line-height: 42px;
    color: #1c1c1c;
}

/* import dialog */
.overlay {
    position: fixed;
    inset: 0;
    display: flex;
    justify-content: center;
    align-items: flex-start;
    padding: 284px 0 0 4px;
}
.dialog {
    width: 1200px;
    padding: 37px 22px 66px 39px;
    background: #fff;
    border-radius: 4px;
    box-shadow: 0 4px 0 #606060;
}
.dialog-head {
    display: flex;
    justify-content: space-between;
    align-items: center;
    height: 50px;
    margin: 0 24px 91px 1px;
}
.dialog-head h2 {
    margin: 0;
    font-size: 36px;
    font-weight: 400;
    color: #303133;
}
.close {
    padding-bottom: 8px;
}
.form-row {
    display: flex;
    align-items: flex-start;
    height: 64px;
    margin-bottom: 10px;
    color: #4b4e53;
}
.form-row label {
    width: 187px;
    line-height: 40px;
}
.form-row input {
    flex: 1;
    height: 56px;
    padding: 0 30px;
    border: 2px solid #d9dce5;
    border-radius: 8px;
    outline: none;
}
.upload {
    display: flex;
    justify-content: center;
    align-items: center;
    gap: 2px;
    width: 184px;
    height: 64px;
    margin-left: 21px;
    background: #549eff;
    border-radius: 6px;
    color: #fff;
}
.preview {
    width: 1120px;
    height: 600px;
}
.map path {
    stroke: #56655e;
    stroke-width: 1px;
    vector-effect: non-scaling-stroke;
}
.dialog-foot {
    display: flex;
    justify-content: center;
    gap: 20px;
    margin: 30px 19px 0 0;
}
.dialog-foot button {
    width: 112px;
    height: 56px;
    border-radius: 6px;
}
.cancel {
    border: 2px solid #d9dce5;
    color: #4b4e53;
}
.ok {
    background: #3388ff;
    color: #fff;
}
```
